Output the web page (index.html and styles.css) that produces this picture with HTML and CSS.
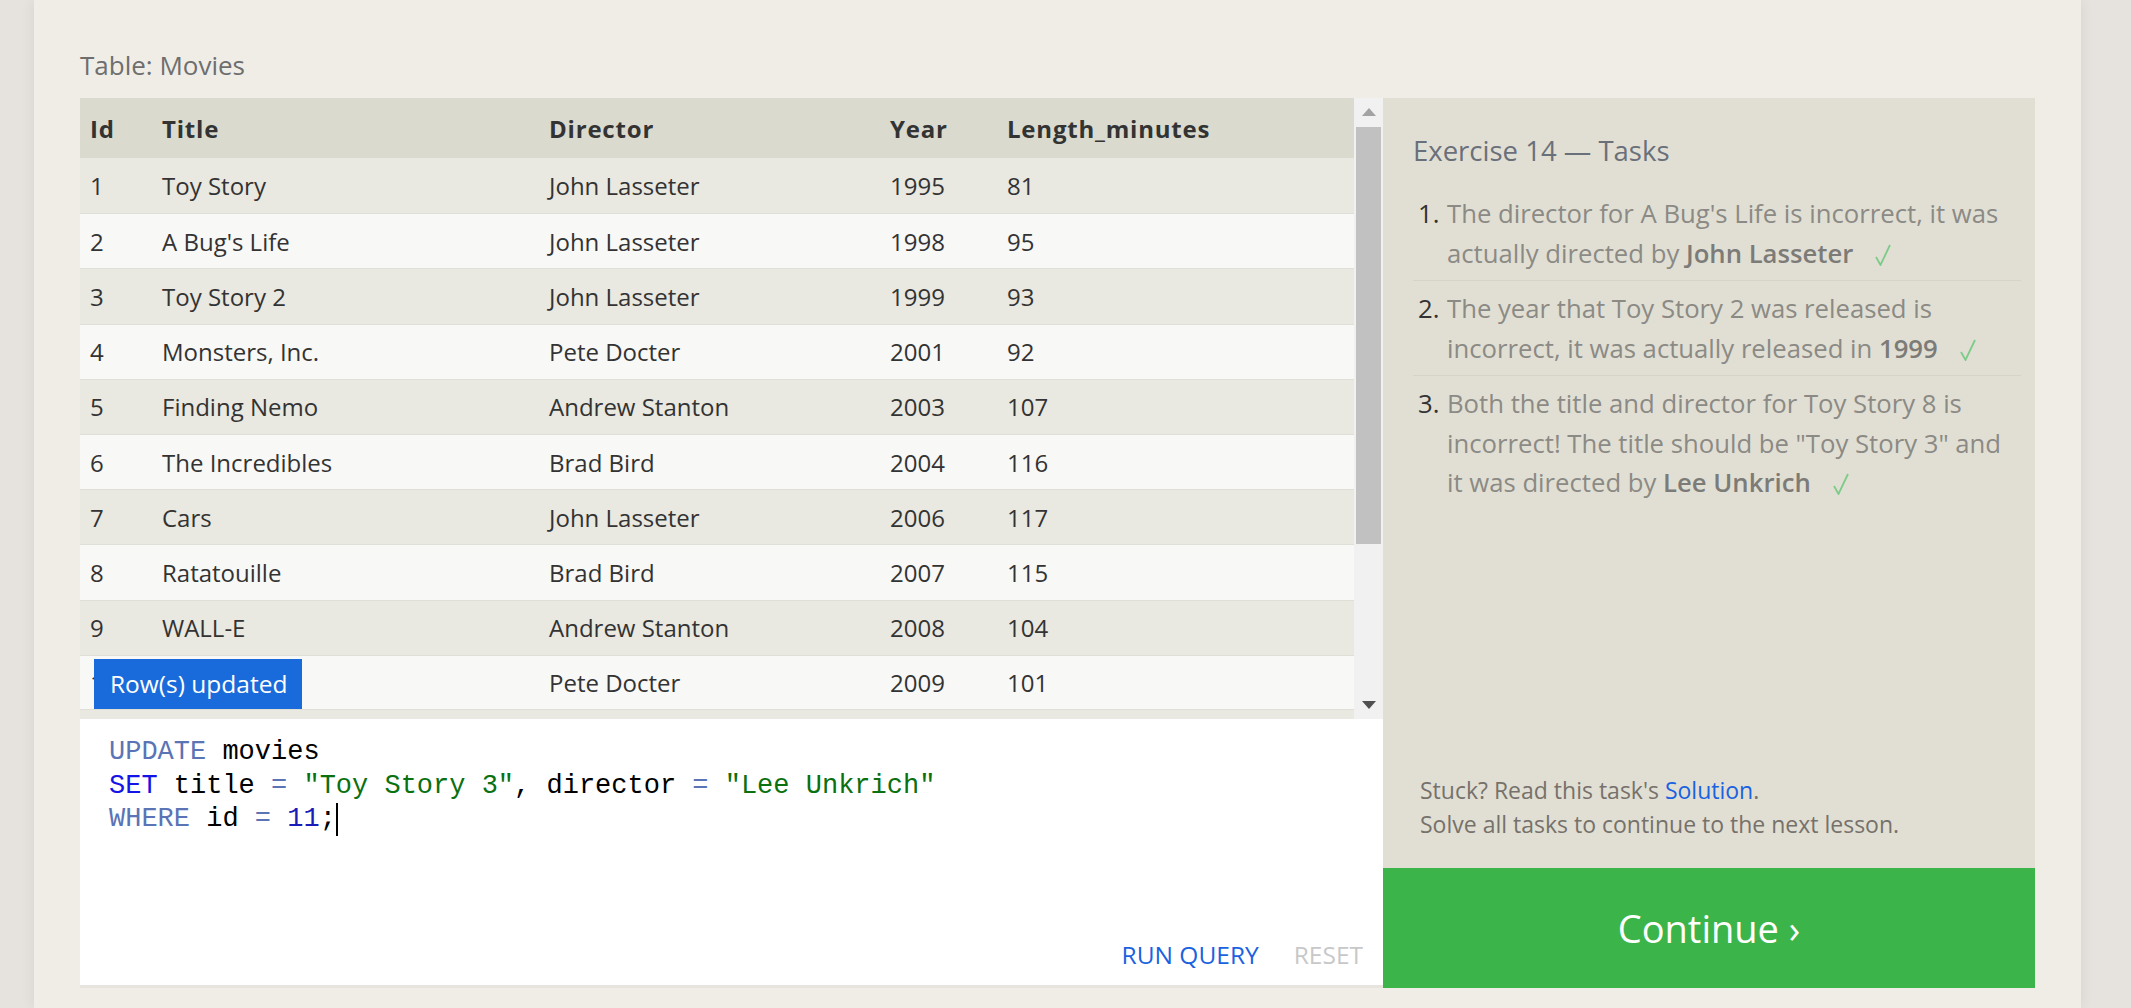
FILE: index.html
```html
<!DOCTYPE html>
<html lang="en">
<head>
<meta charset="utf-8">
<title>SQLBolt - Exercise 14</title>
<link rel="stylesheet" href="styles.css">
</head>
<body>
<div class="page">
  <div class="lesson">
    <div class="table-label">Table: Movies</div>
    <div class="workspace">
      <div class="left">
        <div class="results">
          <div class="table-scroll">
            <table class="movies">
              <colgroup>
                <col class="c-id"><col class="c-title"><col class="c-director"><col class="c-year"><col class="c-length">
              </colgroup>
              <thead>
                <tr><th>Id</th><th>Title</th><th>Director</th><th>Year</th><th>Length_minutes</th></tr>
              </thead>
              <tbody>
                <tr><td>1</td><td>Toy Story</td><td>John Lasseter</td><td>1995</td><td>81</td></tr>
                <tr><td>2</td><td>A Bug's Life</td><td>John Lasseter</td><td>1998</td><td>95</td></tr>
                <tr><td>3</td><td>Toy Story 2</td><td>John Lasseter</td><td>1999</td><td>93</td></tr>
                <tr><td>4</td><td>Monsters, Inc.</td><td>Pete Docter</td><td>2001</td><td>92</td></tr>
                <tr><td>5</td><td>Finding Nemo</td><td>Andrew Stanton</td><td>2003</td><td>107</td></tr>
                <tr><td>6</td><td>The Incredibles</td><td>Brad Bird</td><td>2004</td><td>116</td></tr>
                <tr><td>7</td><td>Cars</td><td>John Lasseter</td><td>2006</td><td>117</td></tr>
                <tr><td>8</td><td>Ratatouille</td><td>Brad Bird</td><td>2007</td><td>115</td></tr>
                <tr><td>9</td><td>WALL-E</td><td>Andrew Stanton</td><td>2008</td><td>104</td></tr>
                <tr><td>10</td><td>Up</td><td>Pete Docter</td><td>2009</td><td>101</td></tr>
              </tbody>
            </table>
          </div>
          <div class="scrollbar">
            <div class="sb-btn"><span class="tri-up"></span></div>
            <div class="sb-thumb"></div>
            <div class="sb-space"></div>
            <div class="sb-btn"><span class="tri-down"></span></div>
          </div>
          <div class="toast">Row(s) updated</div>
        </div>
        <div class="editor">
<pre class="code"><span class="kw">UPDATE</span> movies
<span class="kw2">SET</span> title <span class="op">=</span> <span class="str">"Toy Story 3"</span>, director <span class="op">=</span> <span class="str">"Lee Unkrich"</span>
<span class="kw">WHERE</span> id <span class="op">=</span> <span class="num">11</span>;<span class="cursor"></span></pre>
          <div class="actions">
            <span class="run">RUN QUERY</span>
            <span class="reset">RESET</span>
          </div>
        </div>
      </div>
      <div class="tasks">
        <div class="tasks-body">
          <h2 class="tasks-title">Exercise 14 — Tasks</h2>
          <ol class="task-list">
            <li class="task"><span class="task-num">1.</span><span class="task-text">The director for A Bug's Life is incorrect, it was<br>actually directed by <b>John Lasseter</b><svg class="check" viewBox="0 0 16 22" width="16" height="22"><polyline points="1,13 5.5,21 15,1"/></svg></span></li>
            <li class="task"><span class="task-num">2.</span><span class="task-text">The year that Toy Story 2 was released is<br>incorrect, it was actually released in <b>1999</b><svg class="check" viewBox="0 0 16 22" width="16" height="22"><polyline points="1,13 5.5,21 15,1"/></svg></span></li>
            <li class="task last"><span class="task-num">3.</span><span class="task-text">Both the title and director for Toy Story 8 is<br>incorrect! The title should be "Toy Story 3" and<br>it was directed by <b>Lee Unkrich</b><svg class="check" viewBox="0 0 16 22" width="16" height="22"><polyline points="1,13 5.5,21 15,1"/></svg></span></li>
          </ol>
        </div>
        <div class="tasks-footer">
          <div>Stuck? Read this task's <span class="link">Solution</span>.</div>
          <div>Solve all tasks to continue to the next lesson.</div>
        </div>
        <div class="continue">Continue ›</div>
      </div>
    </div>
  </div>
</div>
</body>
</html>
```

FILE: styles.css
```css
html, body {
  margin: 0;
  padding: 0;
}

body {
  background: #e6e2de;
  font-family: "Open Sans", "Noto Sans", sans-serif;
  color: #333;
  overflow: hidden;
}

.page {
  margin-left: 34px;
  width: 2047px;
  height: 1008px;
  background: #f0ede6;
  box-shadow: 0 0 14px rgba(0, 0, 0, 0.07);
  box-sizing: border-box;
  padding-left: 46px;
}

.lesson {
  padding-top: 47px;
}

.table-label {
  font-size: 26px;
  line-height: 36px;
  height: 36px;
  color: #6e6e6e;
  margin-bottom: 15px;
}

.workspace {
  display: flex;
}

.left {
  width: 1303px;
  display: flex;
  flex-direction: column;
}

.results {
  position: relative;
  height: 621px;
  display: flex;
}

.table-scroll {
  flex: 1;
  overflow: hidden;
  background: #e9e8e1;
}

.movies {
  width: 1274px;
  border-collapse: separate;
  border-spacing: 0;
  table-layout: fixed;
  font-size: 24px;
  color: #333;
}

.c-id { width: 72px; }
.c-title { width: 387px; }
.c-director { width: 341px; }
.c-year { width: 117px; }
.c-length { width: 357px; }

.movies th {
  background: #dadacf;
  text-align: left;
  font-weight: 700;
  letter-spacing: 0.8px;
  height: 60px;
  padding: 0 10px;
  box-sizing: border-box;
  white-space: nowrap;
}

.movies td {
  height: 55.2px;
  padding: 0 10px;
  box-sizing: border-box;
  white-space: nowrap;
  border-top: 1px solid #dfded7;
}

.movies tbody tr:first-child td {
  border-top: none;
}

.movies tbody tr:last-child td {
  border-bottom: 1px solid #dfded7;
}

.movies tbody tr:nth-child(odd) td {
  background: #e9e8e1;
}

.movies tbody tr:nth-child(even) td {
  background: #f8f8f7;
}

.scrollbar {
  width: 29px;
  background: #f1f1f1;
  display: flex;
  flex-direction: column;
  align-items: center;
}

.sb-btn {
  height: 28px;
  width: 100%;
  display: flex;
  align-items: center;
  justify-content: center;
}

.tri-up {
  width: 0;
  height: 0;
  border-left: 7px solid transparent;
  border-right: 7px solid transparent;
  border-bottom: 8px solid #a3a3a3;
}

.tri-down {
  width: 0;
  height: 0;
  border-left: 7px solid transparent;
  border-right: 7px solid transparent;
  border-top: 8px solid #505050;
}

.sb-thumb {
  width: 25px;
  height: 417px;
  margin-top: 1px;
  background: #c1c1c1;
}

.sb-space {
  flex: 1;
}

.toast {
  position: absolute;
  left: 14px;
  bottom: 10px;
  width: 208px;
  height: 50px;
  box-sizing: border-box;
  padding-left: 16px;
  background: #196bdb;
  color: #fff;
  font-size: 24.5px;
  line-height: 50px;
  white-space: nowrap;
}

.editor {
  height: 269px;
  box-sizing: border-box;
  background: #fff;
  border-bottom: 3px solid #e6e4dc;
  padding: 17px 20px 12px 29px;
  display: flex;
  flex-direction: column;
}

.code {
  margin: 0;
  font-family: "Liberation Mono", "DejaVu Sans Mono", monospace;
  font-size: 27px;
  line-height: 33.5px;
  color: #000;
}

.kw { color: #5a74b6; }
.kw2 { color: #1414e6; }
.op { color: #5a74b6; }
.str { color: #0a7010; }
.num { color: #1b1bb8; }

.cursor {
  display: inline-block;
  width: 2px;
  height: 33px;
  background: #000;
  vertical-align: top;
}

.actions {
  margin-top: auto;
  align-self: flex-end;
  display: flex;
  gap: 35px;
  font-size: 24.5px;
  line-height: 36px;
}

.run { color: #1a62e0; }
.reset { color: #c8c8c8; }

.tasks {
  width: 652px;
  height: 890px;
  background: #e1dfd4;
  display: flex;
  flex-direction: column;
}

.tasks-body {
  padding: 35px 14px 0 30px;
  flex: 1;
}

.tasks-title {
  margin: 0;
  font-size: 27.5px;
  font-weight: 400;
  line-height: 36px;
  color: #6a707a;
}

.task-list {
  list-style: none;
  margin: 25px 0 0 0;
  padding: 0;
}

.task {
  display: flex;
  font-size: 25.7px;
  line-height: 39.5px;
  color: #8b8a85;
  padding-bottom: 7px;
  border-bottom: 1px solid #d6d4c9;
  margin-bottom: 8px;
  white-space: nowrap;
}

.task.last {
  border-bottom: none;
}

.task-num {
  width: 34px;
  padding-left: 5px;
  box-sizing: border-box;
  flex: none;
  color: #333;
}

.task-text b {
  color: #7c7b77;
  font-weight: 600;
}

.check {
  margin-left: 22px;
  vertical-align: -3px;
  fill: none;
  stroke: #7dcb88;
  stroke-width: 1.8;
}

.tasks-footer {
  padding: 0 20px 27px 37px;
  font-size: 23px;
  line-height: 34px;
  color: #76716b;
}

.link {
  color: #1a62e0;
}

.continue {
  height: 120px;
  background: #3bb54a;
  color: #fff;
  font-size: 38px;
  display: flex;
  align-items: center;
  justify-content: center;
}
```
